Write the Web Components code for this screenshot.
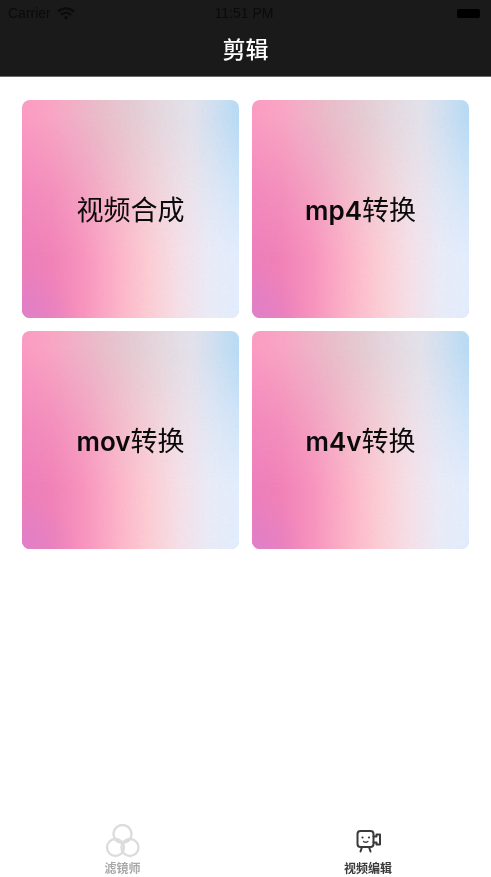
<!DOCTYPE html>
<html lang="zh">
<head>
<meta charset="utf-8">
<title>剪辑</title>
<style>
  html, body { margin: 0; background: #fff; }
  body { width: 491px; height: 877px; overflow: hidden; font-family: "Noto Sans CJK SC", sans-serif; }
  b { font-weight: 600; font-size: 26px; }
</style>
</head>
<body>
<app-screen>
  <nav-header slot="header" title="剪辑"></nav-header>
  <gradient-card>视频合成</gradient-card>
  <gradient-card><b>mp4</b>转换</gradient-card>
  <gradient-card><b>mov</b>转换</gradient-card>
  <gradient-card><b>m4v</b>转换</gradient-card>
  <tab-bar slot="tabs"></tab-bar>
</app-screen>

<script>
class AppScreen extends HTMLElement {
    constructor() {
        super();
        this.attachShadow({ mode: "open" }).innerHTML = `
<style>
    :host { display: flex; flex-direction: column; width: 491px; height: 877px; background: #fff; }
    main {
        display: grid;
        grid-template-columns: 217px 217px;
        grid-auto-rows: 218px;
        column-gap: 13px;
        row-gap: 13px;
        padding: 23px 22px 0;
    }
    .tabs { margin-top: auto; }
</style>
<slot name="header"></slot>
<main><slot></slot></main>
<div class="tabs"><slot name="tabs"></slot></div>`;
    }
}

class NavHeader extends HTMLElement {
    constructor() {
        super();
        this.attachShadow({ mode: "open" }).innerHTML = `
<style>
    :host {
        display: block;
        box-sizing: border-box;
        height: 77px;
        background: #1a1a1a;
        border-bottom: 1px solid #6b6b6b;
        font-family: "Liberation Sans", "Noto Sans CJK SC", sans-serif;
    }
    .status {
        display: grid;
        grid-template-columns: 1fr auto 1fr;
        align-items: center;
        height: 26px;
        padding: 0 11px 0 8px;
        color: #0b0b0b;
        font-size: 14px;
    }
    .left { display: flex; align-items: center; gap: 6px; }
    .right { display: flex; justify-content: flex-end; }
    .battery { width: 23px; height: 9px; background: #000; border-radius: 2px; }
    h1 {
        margin: 0;
        padding-top: 6px;
        height: 32px;
        text-align: center;
        color: #fff;
        font: 500 23px/32px "Noto Sans CJK SC", sans-serif;
    }
</style>
<div class="status">
    <div class="left">
        <span>Carrier</span>
        <svg width="18" height="13" viewBox="0 0 18 13" fill="none" stroke="#0b0b0b" stroke-width="2.1">
            <path d="M1 4.6a11.5 11.5 0 0 1 16 0"/>
            <path d="M4 7.7a7.3 7.3 0 0 1 10 0"/>
            <circle cx="9" cy="10.8" r="1.7" fill="#0b0b0b" stroke="none"/>
        </svg>
    </div>
    <span>11:51 PM</span>
    <div class="right"><div class="battery"></div></div>
</div>
<h1></h1>`;
    }

    connectedCallback() {
        this.shadowRoot.querySelector("h1").textContent = this.getAttribute("title") ?? "";
        this.removeAttribute("title");
    }
}

class GradientCard extends HTMLElement {
    constructor() {
        super();
        this.attachShadow({ mode: "open" }).innerHTML = `
<style>
    :host {
        display: flex;
        align-items: center;
        justify-content: center;
        position: relative;
        overflow: hidden;
        border-radius: 8px;
        padding-top: 2px;
        box-sizing: border-box;
        color: #0a0a0a;
        font: 400 27px/1 "Inter", "Noto Sans CJK SC", sans-serif;
        background: linear-gradient(90deg, #fd9cc4 0%, #faa6c5 14%, #ecbccb 34%, #e6ccd4 50%, #e6dbe2 66%, #e4e3ec 78%, #d2e1f2 88%, #b8dcf6 100%);
    }
    .bottom, .corner, svg { position: absolute; inset: 0; }
    .bottom {
        background: linear-gradient(90deg, #ee7fbc 0%, #f283b9 14%, #f994bf 28%, #feb6ca 45%, #fdcdd5 58%, #f7e0e8 72%, #ebecf8 86%, #e3eefe 100%);
        -webkit-mask-image: linear-gradient(180deg, transparent 8%, rgba(0,0,0,.6) 42%, #000 72%);
        mask-image: linear-gradient(180deg, transparent 8%, rgba(0,0,0,.6) 42%, #000 72%);
    }
    .corner { background: radial-gradient(circle at 0 100%, rgba(214,128,214,.55), rgba(214,128,214,0) 18%); }
    svg { width: 100%; height: 100%; opacity: .05; mix-blend-mode: multiply; }
    span { position: relative; }
</style>
<div class="bottom"></div>
<div class="corner"></div>
<svg aria-hidden="true">
    <filter id="grain"><feTurbulence type="fractalNoise" baseFrequency=".35" numOctaves="2" seed="4"/><feColorMatrix type="saturate" values="0"/></filter>
    <rect width="100%" height="100%" filter="url(#grain)"/>
</svg>
<span><slot></slot></span>`;
    }
}

class TabBar extends HTMLElement {
    constructor() {
        super();
        this.attachShadow({ mode: "open" }).innerHTML = `
<style>
    :host {
        display: grid;
        grid-template-columns: 245px 246px;
        height: 54px;
        font: 700 12px/14px "Noto Sans CJK SC", sans-serif;
    }
    .tab { display: flex; flex-direction: column; align-items: center; }
    svg { display: block; }
    .off { color: #a8a8a8; }
    .on { color: #3a3a3a; }
</style>
<div class="tab off">
    <svg width="36" height="38" viewBox="0 0 36 38" fill="none" stroke="#dcdcdc" stroke-width="2.4">
        <circle cx="17.5" cy="11" r="9"/>
        <circle cx="10.5" cy="24.5" r="8.5"/>
        <circle cx="25" cy="24.5" r="8.5"/>
    </svg>
    <span>滤镜师</span>
</div>
<div class="tab on">
    <svg width="36" height="38" viewBox="0 0 36 38" fill="none" stroke="#3a3a3a" stroke-width="2" stroke-linecap="round" stroke-linejoin="round">
        <rect x="7.5" y="8" width="16" height="16" rx="3"/>
        <path d="M23.5 13.5h3v-2h3.5v10h-3.5v-2h-3"/>
        <path d="M12 24l-1.5 4.5M19 24l1.5 4.5"/>
        <circle cx="12.5" cy="14.5" r="1.1" fill="#3a3a3a" stroke="none"/>
        <circle cx="19" cy="14.5" r="1.1" fill="#3a3a3a" stroke="none"/>
        <path d="M13.5 18.5q2.2 1.6 4.4 0" stroke-width="1.4"/>
    </svg>
    <span>视频编辑</span>
</div>`;
    }
}

customElements.define("app-screen", AppScreen);
customElements.define("nav-header", NavHeader);
customElements.define("gradient-card", GradientCard);
customElements.define("tab-bar", TabBar);
</script>
</body>
</html>
